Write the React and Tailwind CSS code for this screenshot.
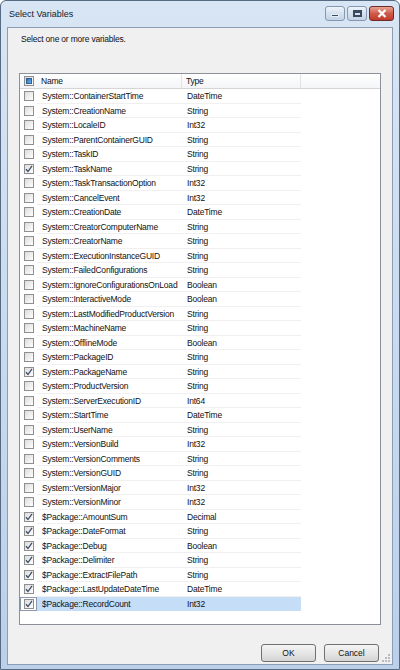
import React from 'react'

const rows = [
  ['System::ContainerStartTime', 'DateTime'],
  ['System::CreationName', 'String'],
  ['System::LocaleID', 'Int32'],
  ['System::ParentContainerGUID', 'String'],
  ['System::TaskID', 'String'],
  ['System::TaskName', 'String', true],
  ['System::TaskTransactionOption', 'Int32'],
  ['System::CancelEvent', 'Int32'],
  ['System::CreationDate', 'DateTime'],
  ['System::CreatorComputerName', 'String'],
  ['System::CreatorName', 'String'],
  ['System::ExecutionInstanceGUID', 'String'],
  ['System::FailedConfigurations', 'String'],
  ['System::IgnoreConfigurationsOnLoad', 'Boolean'],
  ['System::InteractiveMode', 'Boolean'],
  ['System::LastModifiedProductVersion', 'String'],
  ['System::MachineName', 'String'],
  ['System::OfflineMode', 'Boolean'],
  ['System::PackageID', 'String'],
  ['System::PackageName', 'String', true],
  ['System::ProductVersion', 'String'],
  ['System::ServerExecutionID', 'Int64'],
  ['System::StartTime', 'DateTime'],
  ['System::UserName', 'String'],
  ['System::VersionBuild', 'Int32'],
  ['System::VersionComments', 'String'],
  ['System::VersionGUID', 'String'],
  ['System::VersionMajor', 'Int32'],
  ['System::VersionMinor', 'Int32'],
  ['$Package::AmountSum', 'Decimal', true],
  ['$Package::DateFormat', 'String', true],
  ['$Package::Debug', 'Boolean', true],
  ['$Package::Delimiter', 'String', true],
  ['$Package::ExtractFilePath', 'String', true],
  ['$Package::LastUpdateDateTime', 'DateTime', true],
  ['$Package::RecordCount', 'Int32', true],
]

function CheckBox({ checked, mixed }) {
  return (
    <div className="w-[10px] h-[10px] border border-[#8e8f8f] bg-gradient-to-br from-[#dcdcdc] to-[#ffffff] flex items-center justify-center">
      {mixed && <div className="w-[6px] h-[6px] bg-gradient-to-br from-[#2f6fb6] to-[#6fb2e8] border border-[#2c5f96]" />}
      {checked && (
        <svg width="8" height="8" viewBox="0 0 8 8">
          <path d="M1 4.2 L3 6.5 L7 0.8" fill="none" stroke="#3d4e6a" strokeWidth="1.3" />
        </svg>
      )}
    </div>
  )
}

function CaptionButton({ children, close }) {
  return (
    <div
      className={
        close
          ? 'w-[25px] h-[15px] rounded-[3px] border border-[#6d2b25] bg-gradient-to-b from-[#e8a393] via-[#cf5a4a] to-[#c0392b] flex items-center justify-center'
          : 'w-[20px] h-[15px] rounded-[3px] border border-[#8598b0] bg-gradient-to-b from-[#eef3f9] via-[#d5e1ef] to-[#c3d3e7] flex items-center justify-center'
      }
    >
      {children}
    </div>
  )
}

export default function App() {
  return (
    <div className="w-[400px] h-[670px] flex flex-col border border-[#566a82] rounded-t-[6px] bg-gradient-to-b from-[#d8e5f4] to-[#bbd0e9] px-[6px] pb-[4px] overflow-hidden" style={{ fontFamily: '"Liberation Sans", Arial, sans-serif' }}>
      <div className="h-[26px] flex items-center justify-between pl-[2px]">
        <span className="text-[9px] text-[#14202e] leading-none">Select Variables</span>
        <div className="flex items-start gap-[2px] self-start pt-[5px] -mr-[1px]">
          <CaptionButton>
            <div className="w-[8px] h-[3px] bg-[#3a4a5e] mt-[4px] border border-[#e8eef6]" />
          </CaptionButton>
          <CaptionButton>
            <div className="w-[9px] h-[7px] border-2 border-t-[3px] border-[#3a4a5e]" />
          </CaptionButton>
          <CaptionButton close>
            <svg width="10" height="9" viewBox="0 0 10 9">
              <path d="M1.5 1 L8.5 8 M8.5 1 L1.5 8" stroke="#ffffff" strokeWidth="2.2" />
            </svg>
          </CaptionButton>
        </div>
      </div>

      <div className="flex-1 border border-[#8a9db5] bg-[#f0f0f0] flex flex-col relative">
        <div className="pl-[13px] pt-[5px] h-[45px] text-[8.5px] tracking-[-0.2px] leading-[12px] text-[#111111]">Select one or more variables.</div>

        <div className="mx-[11px] h-[552px] border border-[#8c9098] bg-white flex flex-col text-[8.5px] tracking-[-0.2px] text-[#111111]">
          <div className="h-[15px] flex items-stretch border-b border-[#d5d5d5] bg-gradient-to-b from-white to-[#f4f5f7] leading-[14px]">
            <div className="w-[17px] flex items-center justify-center pl-[1px]">
              <CheckBox mixed />
            </div>
            <div className="w-[145px] pl-[4px] border-r border-[#e2e3e5]">Name</div>
            <div className="w-[119px] pl-[4px] border-r border-[#e2e3e5]">Type</div>
          </div>
          {rows.map(([name, type, checked], i) => {
            const sel = i === rows.length - 1
            return (
              <div key={name} className="h-[14.5px] flex items-stretch leading-[14px]">
                <div className={sel ? 'w-[17px] flex items-center justify-center pl-[1px] border border-[#8a99ad]' : 'w-[17px] flex items-center justify-center pl-[1px]'}>
                  <CheckBox checked={checked} />
                </div>
                <div className={sel ? 'w-[145px] pl-[5px] bg-[#c5ddf7] whitespace-nowrap' : 'w-[145px] pl-[5px] border-b border-[#f0f0f0] whitespace-nowrap'}>{name}</div>
                <div className={sel ? 'w-[119px] pl-[5px] bg-[#c5ddf7]' : 'w-[119px] pl-[5px] border-b border-[#f0f0f0]'}>{type}</div>
              </div>
            )
          })}
        </div>

        <div className="flex justify-end gap-[8px] mt-[19px] mr-[13px]">
          <button className="w-[55px] h-[18px] rounded-[3px] border border-[#707070] bg-gradient-to-b from-[#f4f4f4] via-[#e6e6e6] to-[#d3d3d3] text-[8.5px] leading-none text-[#111111]">OK</button>
          <button className="w-[55px] h-[18px] rounded-[3px] border border-[#707070] bg-gradient-to-b from-[#f4f4f4] via-[#e6e6e6] to-[#d3d3d3] text-[8.5px] leading-none text-[#111111]">Cancel</button>
        </div>

        <svg className="absolute right-[1px] bottom-[1px]" width="10" height="10" viewBox="0 0 10 10">
          <g fill="#b8bcc2">
            <rect x="7" y="1" width="2" height="2" />
            <rect x="4" y="4" width="2" height="2" />
            <rect x="7" y="4" width="2" height="2" />
            <rect x="1" y="7" width="2" height="2" />
            <rect x="4" y="7" width="2" height="2" />
            <rect x="7" y="7" width="2" height="2" />
          </g>
        </svg>
      </div>
    </div>
  )
}
